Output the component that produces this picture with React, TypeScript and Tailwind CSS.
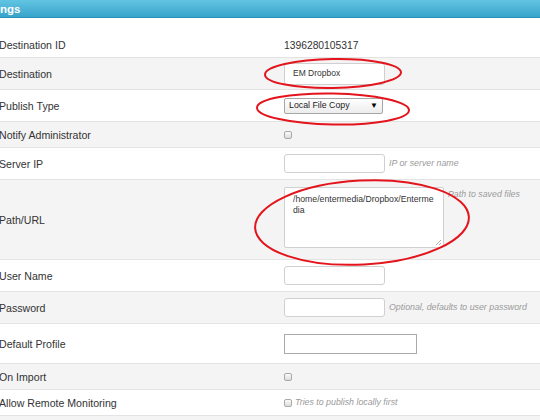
import React from "react";

const font = { fontFamily: '"Liberation Sans", Arial, sans-serif' };

function Row({
  label,
  h,
  gray,
  align = "center",
  children,
}: {
  label: string;
  h: string;
  gray?: boolean;
  align?: "center" | "start";
  children?: React.ReactNode;
}) {
  return (
    <div
      className={`flex border-b border-[#e3e3e3] ${h} ${gray ? "bg-[#f4f4f4]" : "bg-white"} ${
        align === "start" ? "items-stretch" : "items-center"
      }`}
    >
      <div className="ml-[-1px] w-[285px] shrink-0 self-center pt-[2px] text-[10.6px] text-[#333]">{label}</div>
      <div className={`flex flex-1 ${align === "start" ? "items-start pt-[7px]" : "items-center"}`}>{children}</div>
    </div>
  );
}

function TextInput({ value, w = "w-[101px]", h = "h-[19px]" }: { value?: string; w?: string; h?: string }) {
  return (
    <div
      className={`${w} ${h} flex items-center rounded-[3px] border border-[#d0d0d0] bg-white pl-[8px] text-[8.5px] text-[#333]`}
    >
      {value}
    </div>
  );
}

function Help({ children, ml = "ml-[4px]" }: { children: React.ReactNode; ml?: string }) {
  return <span className={`${ml} pt-[1px] text-[8.8px] italic text-[#9a9a9a]`}>{children}</span>;
}

function Checkbox() {
  return (
    <div className="h-[8px] w-[8px] rounded-[2px] border border-[#a9a9a9] bg-gradient-to-b from-[#fbfbfb] to-[#dcdcdc]" />
  );
}

export default function App() {
  return (
    <div className="relative h-[420px] w-[540px] overflow-hidden bg-white" style={font}>
      <div className="h-[18px] border-b border-[#2c92b7] bg-gradient-to-b from-[#62c4e2] to-[#36a4cb] text-[11.5px] font-bold leading-[18px] text-white">
        ngs
      </div>
      <div className="h-[14px]" />
      <Row label="Destination ID" h="h-[26px]">
        <span className="pt-[2px] text-[10.3px] text-[#333]">1396280105317</span>
      </Row>
      <Row label="Destination" h="h-[32px]" gray>
        <TextInput value="EM Dropbox" h="h-[22px]" />
      </Row>
      <Row label="Publish Type" h="h-[32px]">
        <div className="flex h-[16px] w-[99px] items-center justify-between rounded-[2px] border border-[#a6a6a6] bg-gradient-to-b from-white to-[#ececec] pl-[4px] pr-[4px] text-[8.8px] text-[#222]">
          <span>Local File Copy</span>
          <span className="text-[8px] leading-none text-black">▼</span>
        </div>
      </Row>
      <Row label="Notify Administrator" h="h-[26px]" gray>
        <Checkbox />
      </Row>
      <Row label="Server IP" h="h-[32px]">
        <TextInput />
        <Help>IP or server name</Help>
      </Row>
      <Row label="Path/URL" h="h-[80px]" gray align="start">
        <div className="relative h-[61px] w-[160px] rounded-[2px] border border-[#d0d0d0] bg-white pl-[8px] pt-[6px] text-[8.7px] leading-[11px] text-[#333]">
          <div>/home/entermedia/Dropbox/Enterme</div>
          <div>dia</div>
          <svg className="absolute bottom-[1px] right-[1px]" width="7" height="7" viewBox="0 0 7 7">
            <path d="M6 1 L1 6 M6 4 L4 6" stroke="#999" strokeWidth="0.8" />
          </svg>
        </div>
        <Help ml="ml-[4px]">Path to saved files</Help>
      </Row>
      <Row label="User Name" h="h-[32px]">
        <TextInput />
      </Row>
      <Row label="Password" h="h-[32px]" gray>
        <TextInput />
        <Help>Optional, defaults to user password</Help>
      </Row>
      <Row label="Default Profile" h="h-[40px]">
        <div className="h-[20px] w-[133px] border border-[#a9a9a9] bg-white" />
      </Row>
      <Row label="On Import" h="h-[26px]" gray>
        <Checkbox />
      </Row>
      <Row label="Allow Remote Monitoring" h="h-[26px]">
        <Checkbox />
        <Help ml="ml-[3px]">Tries to publish locally first</Help>
      </Row>
      <div className="h-[30px] bg-[#f4f4f4]" />

      <svg className="pointer-events-none absolute left-0 top-0" width="540" height="420" viewBox="0 0 540 420">
        <ellipse cx="333" cy="73.5" rx="68" ry="14.5" fill="none" stroke="#e3141c" strokeWidth="2" transform="rotate(-1 333 73.5)" />
        <ellipse cx="333" cy="109" rx="76" ry="15.5" fill="none" stroke="#e3141c" strokeWidth="2" transform="rotate(1 333 109)" />
        <ellipse cx="362" cy="222.5" rx="107" ry="42" fill="none" stroke="#e3141c" strokeWidth="2" transform="rotate(-3 362 222.5)" />
      </svg>
    </div>
  );
}
